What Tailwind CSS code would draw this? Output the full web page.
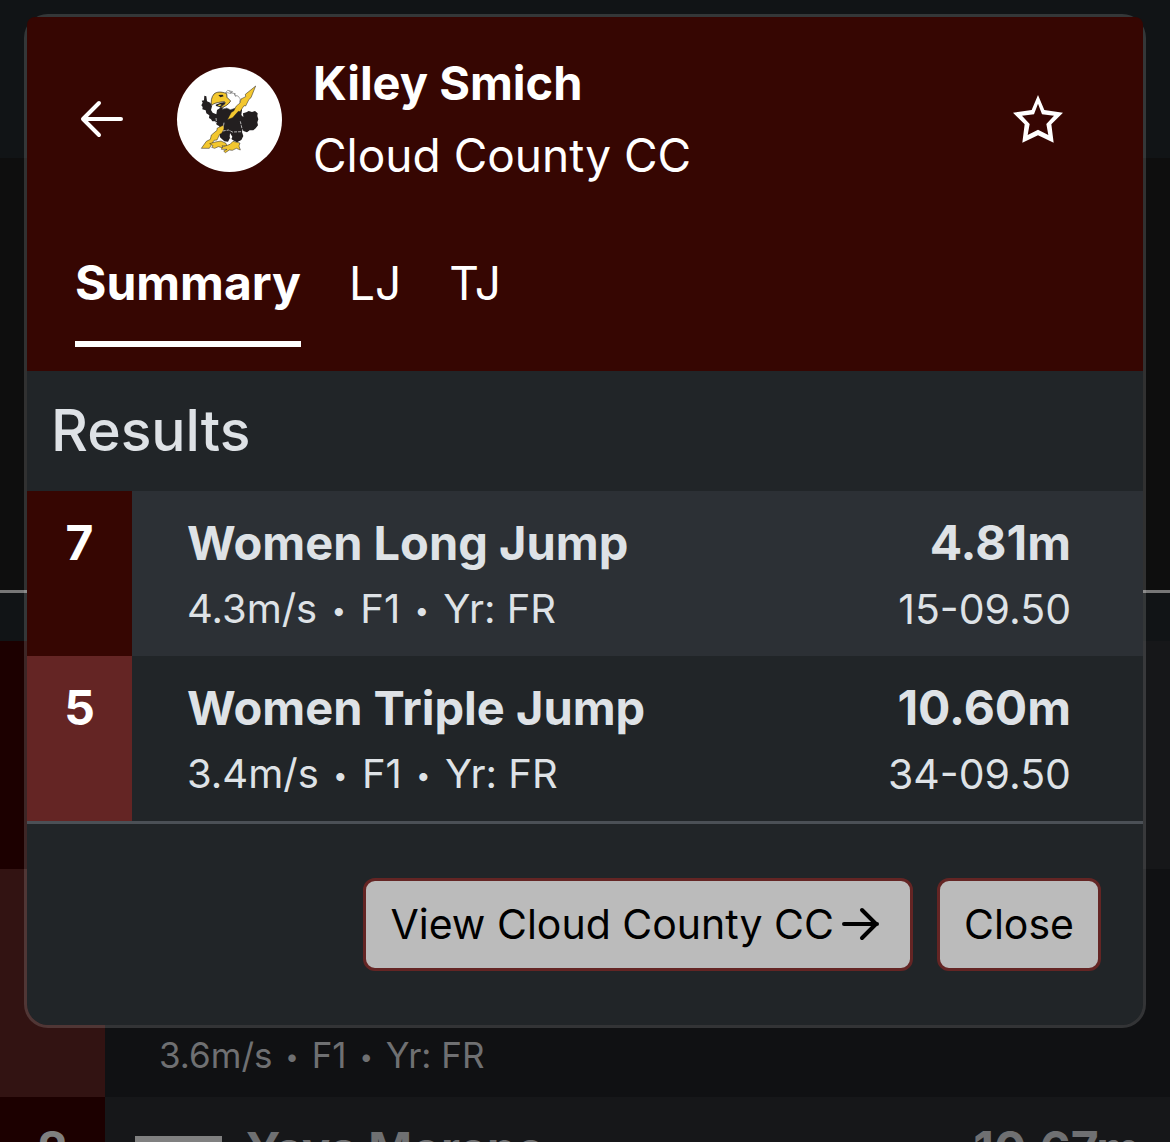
<!DOCTYPE html>
<html lang="en">
<head>
    <meta charset="UTF-8">
    <meta name="viewport" content="width=device-width, initial-scale=1.0">
    <title>Kiley Smich - Results</title>
    <script src="https://cdn.jsdelivr.net/npm/@tailwindcss/browser@4"></script>
</head>
<body class="bg-[#101113] font-['Inter',sans-serif]">
    <div class="relative h-screen overflow-hidden">
        <!-- Page behind the modal -->
        <div class="h-[158px] bg-[#111416]"></div>
        <div class="h-[432px] bg-[#0e0e0e]"></div>
        <div class="h-[51px] border-t-3 border-[#777777] bg-[#111416]"></div>
        <div class="text-[#6f7072]">
            <div class="flex h-[228px] bg-[#161719]">
                <div class="w-[105px] bg-[#1c0000]"></div>
            </div>
            <div class="flex h-[228px] bg-[#101113]">
                <div class="w-[105px] bg-[#321312]"></div>
                <div class="flex flex-1 flex-col justify-end px-[54px] pb-3 text-[35px] leading-[60px]">
                    <p>3.6m/s <span class="mx-[3px] align-[3px] text-[24px] leading-none">•</span> F1 <span class="mx-[3px] align-[3px] text-[24px] leading-none">•</span> Yr: FR</p>
                </div>
            </div>
            <div class="flex h-[228px] bg-[#161719] pr-[30px] text-5xl leading-[72px] font-bold">
                <div class="w-[105px] bg-[#1c0000] pt-4 text-center text-[#808080]">2</div>
                <div class="flex h-[88px] flex-1 items-center gap-6 pt-4 pl-[30px]">
                    <span class="h-[26px] w-[87px] bg-[#808080]"></span>
                    <span class="text-[47px]">Yaya Moreno</span>
                </div>
                <div class="pt-4">10.67m</div>
            </div>
        </div>

        <!-- Athlete modal -->
        <div role="dialog" aria-label="Kiley Smich" class="absolute inset-x-6 top-3.5 rounded-3xl border-3 border-white/15 bg-[#212528] bg-clip-padding text-[#dee2e6]">
            <header class="rounded-t-lg bg-[#360602] px-12 pt-[30px] pb-6 text-white">
                <div class="flex items-center">
                    <button type="button" aria-label="Back" class="-ml-px">
                        <svg class="size-14" viewBox="0 0 56 56" fill="none" stroke="currentColor" stroke-width="4" stroke-linecap="round" stroke-linejoin="round">
                            <path d="M47 28H10M25 12L9 28L25 44"/>
                        </svg>
                    </button>
                    <!-- Thunderbird logo -->
                    <svg class="ml-[47px] size-[105px] rounded-full bg-white" viewBox="21 21 315 315" role="img" aria-label="Cloud County CC logo">
                        <path fill="#231f20" d="M103 107L109 109L111 124L121 128L126 139L123 150L128 158L139 163L141 150L154 142L166 145L184 143L212 138L216 150L214 165L220 172L219 160L229 157L236 153L246 156L255 153L263 160L262 168L265 178L262 187L264 196L257 205L250 211L239 211L231 217L220 213L218 206L216 216L220 228L214 240L201 247L188 240L180 234L174 245L163 244L150 232L148 216L153 208L147 198L140 194L136 184L127 184L123 178L117 174L118 166L109 160L107 151L97 148L98 141L94 136L98 128L95 122L102 121Z"/>
                        <path fill="#fff" stroke="#555" stroke-width="1.500" d="M164 101L173 91L188 95L181 98L196 101L193 105L204 108L211 117L209 125L213 133L209 144L203 153L196 144L188 147L181 149L170 144L157 148L162 139L178 127Z"/>
                        <path fill="none" stroke="#777" stroke-width="2" d="M168 97L184 101M176 92L187 99M192 99L198 111"/>
                        <path fill="#f3c72f" stroke="#231f20" stroke-width="2" d="M170 101C154 94 140 95 132 102C124 111 122 125 125 136C132 129 143 128 153 126C162 123 168 125 165 131L149 144C162 142 175 135 182 123L171 112Z"/>
                        <path fill="#231f20" d="M137 134L152 128L164 126L165 131L151 142L138 138ZM145 105L158 104L161 109L151 112Z"/>
                        <path fill="#f2d84a" d="M143 136L151 133L155 135L148 139Z"/>
                        <path fill="#f3c72f" stroke="#231f20" stroke-width="1.500" d="M257 78L226 103L227 110L213 117L210 129L199 138L191 153L184 157L172 179L188 173L205 154L210 155L222 137L227 138L237 118L243 113Z"/>
                        <path fill="#f3c72f" stroke="#231f20" stroke-width="1.500" d="M161 195L141 205L141 211L124 225L121 238L109 244L94 265L118 265L132 241L141 240L149 223L155 220L162 207Z"/>
                        <path fill="#f3c72f" stroke="#231f20" stroke-width="1.500" d="M119 251L136 246L153 243L168 250L171 259L156 257L160 264L145 260L134 265L125 262L129 257Z"/>
                        <path fill="#f3c72f" stroke="#231f20" stroke-width="1.500" d="M160 260L180 253L189 244L210 249L207 258L211 270L199 265L187 271L178 270L166 278L161 273L171 268L154 268L156 263Z"/>
                        <path fill="none" stroke="#fff" stroke-width="2" stroke-dasharray="9 3" d="M138 174L140 190M158 213L176 210L187 216L216 215M211 184L216 206M162 188L160 202"/>
                        <path fill="#fff" d="M180 219L187 230L183 240L179 231Z"/>
                    </svg>
                    <div class="ml-[31px] flex-1 leading-[72px]">
                        <h1 class="text-[47px] font-bold">Kiley Smich</h1>
                        <p class="text-[46px]">Cloud County CC</p>
                    </div>
                    <button type="button" aria-label="Add to favorites" class="mr-8">
                        <svg class="size-[50px]" viewBox="99 284 150 150" fill="currentColor" fill-rule="evenodd">
                            <path d="M174 287L193 332L249 340L214 375L221 430L174 408L127 430L134 375L99 340L155 332ZM174 313L162 345L126 349L149 374L143 407L174 391L205 407L199 374L222 349L186 345Z"/>
                        </svg>
                    </button>
                </div>
                <nav class="mt-8 flex gap-12 text-[46px] leading-[72px]">
                    <a href="#summary" class="border-b-6 border-white pt-6 pb-[22px] text-5xl leading-[72px] font-bold">Summary</a>
                    <a href="#lj" class="pt-6">LJ</a>
                    <a href="#tj" class="pt-6">TJ</a>
                </nav>
            </header>

            <h2 class="px-6 py-6 text-[57px] leading-[72px] font-medium">Results</h2>
            <table class="w-full">
                <tbody>
                    <tr class="h-[165px] bg-[#2c3035] align-top">
                        <th scope="row" class="w-[105px] bg-[#360602] pt-4 text-5xl leading-[72px] font-bold text-white">7</th>
                        <td class="pt-4 pl-[55px]">
                            <p class="text-[47px] leading-[72px] font-bold">Women Long Jump</p>
                            <p class="text-[40px] leading-[60px]">4.3m/s <span class="mx-[3px] align-[3px] text-[26px] leading-none">•</span> F1 <span class="mx-[3px] align-[3px] text-[26px] leading-none">•</span> Yr: FR</p>
                        </td>
                        <td class="pt-4 pr-18 text-right">
                            <p class="text-5xl leading-[72px] font-bold">4.81m</p>
                            <p class="text-[41px] leading-[60px]">15-09.50</p>
                        </td>
                    </tr>
                    <tr class="h-[165px] align-top">
                        <th scope="row" class="w-[105px] bg-[#642524] pt-4 text-5xl leading-[72px] font-bold text-white">5</th>
                        <td class="pt-4 pl-[55px]">
                            <p class="text-[47px] leading-[72px] font-bold">Women Triple Jump</p>
                            <p class="text-[40px] leading-[60px]">3.4m/s <span class="mx-[3px] align-[3px] text-[26px] leading-none">•</span> F1 <span class="mx-[3px] align-[3px] text-[26px] leading-none">•</span> Yr: FR</p>
                        </td>
                        <td class="pt-4 pr-18 text-right">
                            <p class="text-5xl leading-[72px] font-bold">10.60m</p>
                            <p class="text-[41px] leading-[60px]">34-09.50</p>
                        </td>
                    </tr>
                </tbody>
            </table>

            <footer class="flex justify-end gap-6 border-t-3 border-[#4b5056] py-[54px] pr-[42px] text-[41px] leading-[63px] text-black">
                <a href="#team" class="flex items-center rounded-xl border-3 border-[#642524] bg-[#bbbbbb] px-6 py-3">
                    View Cloud County CC
                    <svg class="ml-1 size-12" viewBox="0 0 48 48" fill="none" stroke="currentColor" stroke-width="4" stroke-linecap="round" stroke-linejoin="round">
                        <path d="M6 23H39M24 9L38 23L24 37"/>
                    </svg>
                </a>
                <button type="button" class="rounded-xl border-3 border-[#642524] bg-[#bbbbbb] px-6 py-3">Close</button>
            </footer>
        </div>
    </div>
</body>
</html>
